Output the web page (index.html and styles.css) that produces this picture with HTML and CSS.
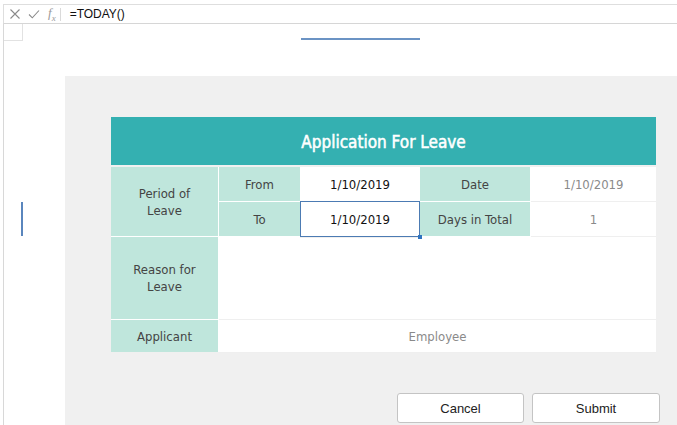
FILE: index.html
```html
<!DOCTYPE html>
<html>
<head>
<meta charset="utf-8">
<link rel="stylesheet" href="styles.css">
</head>
<body>
<div class="formula-bar">
  <svg class="fb-icon" width="12" height="12" viewBox="0 0 12 12"><path d="M1.5 1.5 L10.5 10.5 M10.5 1.5 L1.5 10.5" stroke="#8a8a8a" stroke-width="1.1" fill="none"/></svg>
  <svg class="fb-icon" width="12" height="12" viewBox="0 0 12 12"><path d="M1 6.5 L4.3 9.8 L11 2.5" stroke="#8a8a8a" stroke-width="1.1" fill="none"/></svg>
  <span class="fx">f<sub>x</sub></span>
  <span class="fb-sep"></span>
  <span class="formula">=TODAY()</span>
</div>
<div class="sheet">
  <div class="left-col">
    <div class="corner-cell"></div>
    <div class="v-marker"></div>
  </div>
  <div class="main-col">
    <div class="top-strip"><div class="h-marker"></div></div>
    <div class="canvas">
      <div class="form">
        <div class="title">Application For Leave</div>
        <div class="grid">
          <div class="lbl period">Period of<br>Leave</div>
          <div class="lbl">From</div>
          <div class="val dark">1/10/2019</div>
          <div class="lbl">Date</div>
          <div class="val">1/10/2019</div>
          <div class="lbl">To</div>
          <div class="val dark selected">1/10/2019</div>
          <div class="lbl">Days in Total</div>
          <div class="val">1</div>
          <div class="lbl">Reason for<br>Leave</div>
          <div class="val reason"></div>
          <div class="lbl">Applicant</div>
          <div class="val wide">Employee</div>
        </div>
      </div>
      <div class="actions">
        <button class="btn">Cancel</button>
        <button class="btn">Submit</button>
      </div>
    </div>
  </div>
</div>
</body>
</html>
```
FILE: styles.css
```css
* { box-sizing: border-box; }
html, body { margin: 0; padding: 0; background: #fff; width: 677px; height: 425px; overflow: hidden; }

.formula-bar {
  margin-top: 4px;
  margin-left: 3px;
  height: 20px;
  border-top: 1px solid #dedede;
  border-bottom: 1px solid #d6d6d6;
  border-left: 1px solid #dedede;
  display: flex;
  align-items: center;
  padding-left: 5px;
  font-family: "Liberation Sans", Arial, sans-serif;
}
.fb-icon { margin-right: 7px; }
.fx {
  font-family: "Liberation Serif", serif;
  font-style: italic;
  color: #9a9a9a;
  font-size: 13px;
  margin-left: 1px;
  line-height: 1;
}
.fx sub { font-size: 9px; }
.fb-sep { width: 1px; height: 13px; background: #dadada; margin-left: 4px; margin-right: 9px; }
.formula { font-size: 12px; color: #111; }

.sheet {
  display: flex;
  margin-left: 3px;
  border-left: 1px solid #d8d8d8;
  height: 401px;
}
.left-col { width: 61px; flex: none; }
.corner-cell {
  width: 19px;
  height: 17px;
  border-right: 1px solid #e2e2e2;
  border-bottom: 1px solid #e2e2e2;
}
.v-marker {
  width: 2px;
  height: 34px;
  background: #5a86bd;
  margin-left: 17px;
  margin-top: 161px;
}
.main-col { flex: 1; display: flex; flex-direction: column; }
.top-strip { height: 52px; }
.h-marker {
  width: 119px;
  height: 2px;
  background: #6b93c4;
  margin-left: 236px;
  margin-top: 14px;
}
.canvas {
  flex: 1;
  background: #f0f0f0;
  padding: 41px 21px 0 46px;
  font-family: "DejaVu Sans Condensed", "DejaVu Sans", sans-serif;
}
.form { width: 545px; }
.title {
  height: 48px;
  background: #34b0b1;
  color: #fff;
  font-size: 17px;
  -webkit-text-stroke: 0.5px #fff;
  display: flex;
  align-items: center;
  justify-content: center;
  margin-bottom: 2px;
  padding-top: 1px;
}
.grid {
  display: grid;
  grid-template-columns: 107px 81px 118px 110px 125px;
  grid-template-rows: 34px 34px 82px 32px;
  gap: 1px;
  background: #fff;
  font-size: 13px;
}
.lbl {
  background: #bfe6dc;
  color: #444;
  display: flex;
  align-items: center;
  justify-content: center;
  text-align: center;
  line-height: 17px;
}
.period { grid-row: span 2; }
.val {
  background: #fff;
  color: #8a8a8a;
  display: flex;
  align-items: center;
  justify-content: center;
  box-shadow: 0 1px 0 #efefef;
}
.val.dark { color: #111; }
.reason { grid-column: span 4; }
.wide { grid-column: span 4; }
.selected {
  position: relative;
  border: 1px solid #4c7bb3;
  margin: -1px;
}
.selected::after {
  content: "";
  position: absolute;
  right: -3px;
  bottom: -3px;
  width: 4px;
  height: 4px;
  background: #2f74c0;
}
.actions {
  display: flex;
  justify-content: flex-end;
  gap: 8px;
  margin-top: 41px;
  margin-right: -4px;
}
.btn {
  width: 127px;
  height: 30px;
  background: #fff;
  border: 1px solid #c4c4c4;
  border-radius: 3px;
  font-family: "Liberation Sans", Arial, sans-serif;
  font-size: 13px;
  color: #222;
  padding: 0;
}
.btn + .btn { width: 128px; }
```
